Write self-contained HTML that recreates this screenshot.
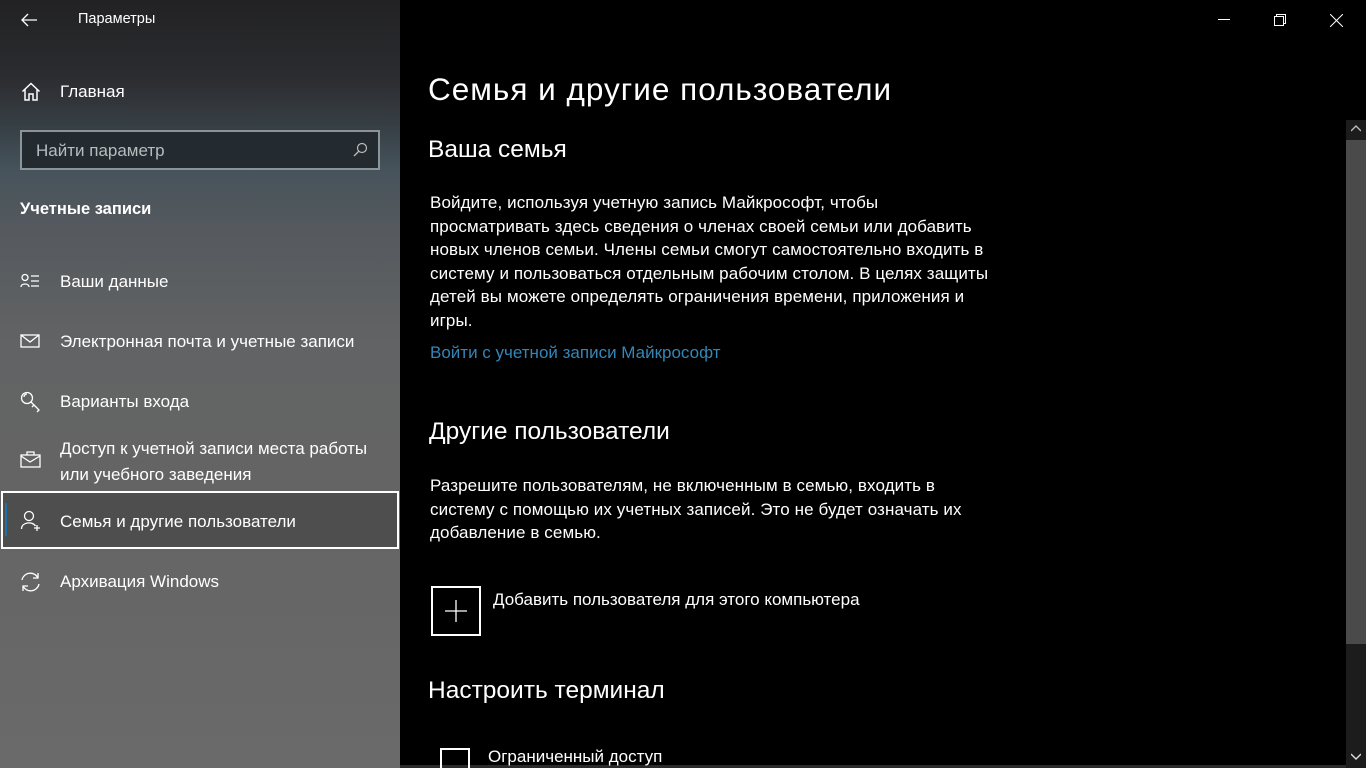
<!DOCTYPE html>
<html><head><meta charset="utf-8"><style>
*{margin:0;padding:0;box-sizing:border-box}
html,body{width:1366px;height:768px;overflow:hidden}
body{background:#000;font-family:"Liberation Sans",sans-serif;color:#fff;position:relative}
.side{position:absolute;left:0;top:0;width:400px;height:768px;background:linear-gradient(180deg,#222225 0%,#2b2c2f 10%,#3a444b 18%,#46535b 22%,#555a5e 30%,#626364 45%,#656565 70%,#6a6a6a 100%)}
.a{position:absolute;white-space:nowrap}
.s{font-size:17px;color:#fff}
.m{font-size:17px;line-height:23.5px;color:#fff;letter-spacing:0.1px}
svg{position:absolute}
</style></head><body>
<div class="side">
<svg style="left:20px;top:12px" width="18" height="16" viewBox="0 0 18 16"><path d="M17 8H2M8 2L2 8l6 6" stroke="#fff" stroke-width="1.3" fill="none"/></svg>
<div class="a" style="left:78px;top:11px;font-size:14.5px">Параметры</div>
<svg style="left:21px;top:82px" width="20" height="19" viewBox="0 0 20 19"><path d="M1.5 9.5L10 1.5l8.5 8M4 7.5V18h4v-6h4v6h4V7.5" stroke="#fff" stroke-width="1.5" fill="none"/></svg>
<div class="a s" style="left:60px;top:82px">Главная</div>
<div class="a" style="left:20px;top:130px;width:360px;height:40px;border:2px solid #8a949a;background:#232b30"></div>
<div class="a" style="left:36px;top:141px;font-size:17px;color:#b8bcbe">Найти параметр</div>
<svg style="left:352px;top:142px" width="16" height="16" viewBox="0 0 16 16"><circle cx="10" cy="6" r="4.5" stroke="#bbb" stroke-width="1.2" fill="none"/><path d="M7 9L2 14" stroke="#bbb" stroke-width="1.3"/></svg>
<div class="a" style="left:20px;top:200px;font-size:16.5px;font-weight:bold">Учетные записи</div>
<svg style="left:20px;top:273px" width="20" height="16" viewBox="0 0 20 16"><circle cx="5" cy="4.5" r="3" stroke="#fff" stroke-width="1.3" fill="none"/><path d="M1 14c0-4 8-4 8 0M11 3h8M11 8h8M11 13h8" stroke="#fff" stroke-width="1.3" fill="none"/></svg>
<div class="a s" style="left:60px;top:272px">Ваши данные</div>
<svg style="left:20px;top:334px" width="20" height="14" viewBox="0 0 20 14"><rect x="1" y="1" width="18" height="12" stroke="#fff" stroke-width="1.3" fill="none"/><path d="M1 1l9 7 9-7" stroke="#fff" stroke-width="1.3" fill="none"/></svg>
<div class="a s" style="left:60px;top:332px">Электронная почта и учетные записи</div>
<svg style="left:20px;top:391px" width="21" height="22" viewBox="0 0 21 22"><circle cx="7" cy="7" r="5.5" stroke="#fff" stroke-width="1.3" fill="none"/><path d="M11 11l8 8-2 2M14 14l-2 2M4 6a3 3 0 0 1 3-3" stroke="#fff" stroke-width="1.3" fill="none"/></svg>
<div class="a s" style="left:60px;top:392px">Варианты входа</div>
<svg style="left:20px;top:451px" width="21" height="17" viewBox="0 0 21 17"><rect x="1" y="4" width="19" height="12" stroke="#fff" stroke-width="1.3" fill="none"/><path d="M7 4V1h7v3M1 5l9 6 10-6" stroke="#fff" stroke-width="1.3" fill="none"/></svg>
<div class="a s" style="left:60px;top:436px;line-height:26px">Доступ к учетной записи места работы<br>или учебного заведения</div>
<div class="a" style="left:1px;top:491px;width:398px;height:58px;border:2px solid #fff;background:rgba(60,60,60,.55)"></div>
<div class="a" style="left:5px;top:503px;width:2px;height:33px;background:#1f6fa8"></div>
<svg style="left:20px;top:510px" width="22" height="22" viewBox="0 0 22 22"><circle cx="9" cy="6" r="4.5" stroke="#fff" stroke-width="1.3" fill="none"/><path d="M1.5 19c0-7 11-8 14-3M17 15v6M14 18h6" stroke="#fff" stroke-width="1.3" fill="none"/></svg>
<div class="a s" style="left:60px;top:512px">Семья и другие пользователи</div>
<svg style="left:20px;top:572px" width="21" height="20" viewBox="0 0 21 20"><path d="M2 8a8.5 8.5 0 0 1 16-2M19 12a8.5 8.5 0 0 1-16 2M18 1v5h-5M3 19v-5h5" stroke="#fff" stroke-width="1.3" fill="none"/></svg>
<div class="a s" style="left:60px;top:572px">Архивация Windows</div>
</div>
<svg style="left:1218px;top:19px" width="12" height="2"><rect width="12" height="1" y="0" fill="#fff"/></svg>
<svg style="left:1274px;top:14px" width="12" height="12" viewBox="0 0 12 12"><rect x=".5" y="2.5" width="9" height="9" stroke="#fff" fill="none"/><path d="M2.5 2.5V.5h9v9h-2" stroke="#fff" fill="none"/></svg>
<svg style="left:1330px;top:14px" width="13" height="13" viewBox="0 0 13 13"><path d="M0 0l13 13M13 0L0 13" stroke="#fff" stroke-width="1"/></svg>
<div class="a" style="left:1346px;top:120px;width:20px;height:648px;background:#1c1c1c"></div>
<div class="a" style="left:1346px;top:140px;width:20px;height:504px;background:#4a4a4a"></div>
<svg style="left:1351px;top:125px" width="10" height="8"><path d="M0 6l5-5 5 5" stroke="#bbb" stroke-width="1.4" fill="none"/></svg>
<svg style="left:1351px;top:753px" width="10" height="8"><path d="M0 1l5 5 5-5" stroke="#ddd" stroke-width="1.4" fill="none"/></svg>
<div class="a" style="left:400px;top:765px;width:946px;height:3px;background:#2a2a2a"></div>
<div class="a" style="left:428px;top:71px;font-size:31.5px;letter-spacing:1px">Семья и другие пользователи</div>
<div class="a" style="left:428px;top:136px;font-size:24.5px">Ваша семья</div>
<div class="a m" style="left:430px;top:191px">Войдите, используя учетную запись Майкрософт, чтобы<br>просматривать здесь сведения о членах своей семьи или добавить<br>новых членов семьи. Члены семьи смогут самостоятельно входить в<br>систему и пользоваться отдельным рабочим столом. В целях защиты<br>детей вы можете определять ограничения времени, приложения и<br>игры.</div>
<div class="a" style="left:430px;top:343px;font-size:17px;color:#3486b8">Войти с учетной записи Майкрософт</div>
<div class="a" style="left:429px;top:418px;font-size:24.5px">Другие пользователи</div>
<div class="a m" style="left:430px;top:474px">Разрешите пользователям, не включенным в семью, входить в<br>систему с помощью их учетных записей. Это не будет означать их<br>добавление в семью.</div>
<div class="a" style="left:431px;top:586px;width:50px;height:50px;border:2px solid #fff"></div>
<svg style="left:445px;top:600px" width="22" height="22"><path d="M11 0v22M0 11h22" stroke="#fff" stroke-width="1.3"/></svg>
<div class="a" style="left:493px;top:590px;font-size:17px">Добавить пользователя для этого компьютера</div>
<div class="a" style="left:428px;top:677px;font-size:24.5px">Настроить терминал</div>
<div class="a" style="left:440px;top:748px;width:30px;height:30px;border:2px solid #fff"></div>
<div class="a" style="left:488px;top:747px;font-size:17px">Ограниченный доступ</div>
</body></html>
